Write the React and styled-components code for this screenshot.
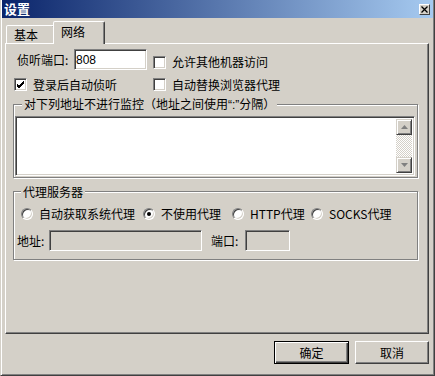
import React from 'react';
import styled, { createGlobalStyle } from 'styled-components';

const GlobalStyle = createGlobalStyle`
  html, body {
    margin: 0;
    padding: 0;
    background: #d4d0c8;
  }
  body {
    font-family: "Noto Sans CJK SC", "Liberation Sans", sans-serif;
    font-size: 12px;
    color: #000;
  }
  * {
    box-sizing: border-box;
  }
`;

const Window = styled.div`
  width: 435px;
  height: 376px;
  background: #d4d0c8;
  border-left: 1px solid #d4d0c8;
  border-right: 1px solid #404040;
  border-bottom: 1px solid #404040;
  box-shadow: inset 1px 0 0 #fff, inset -1px -1px 0 #808080;
  padding: 0 1px 1px 1px;
  display: flex;
  flex-direction: column;
`;

const TitleBar = styled.div`
  height: 18px;
  display: flex;
  align-items: center;
  justify-content: space-between;
  padding: 0 3px 0 2px;
  background: linear-gradient(to right, #0a246a, #a6caf0);
`;

const Title = styled.span`
  color: #fff;
  font-weight: bold;
  font-size: 13px;
  line-height: 18px;
`;

const CloseButton = styled.div`
  width: 11px;
  height: 11px;
  background: #d4d0c8;
  border: 1px solid;
  border-color: #fff #404040 #404040 #fff;
  display: flex;
  align-items: center;
  justify-content: center;
`;

const TabStrip = styled.div`
  height: 22px;
  margin: 3px 4px 0 3px;
  padding-left: 1px;
  display: flex;
  align-items: flex-end;
`;

const Tab = styled.div`
  position: relative;
  width: ${(p) => (p.$active ? 52 : 49)}px;
  height: ${(p) => (p.$active ? 23 : 18)}px;
  margin-left: ${(p) => (p.$active ? -2 : 0)}px;
  margin-bottom: ${(p) => (p.$active ? -1 : 0)}px;
  z-index: ${(p) => (p.$active ? 2 : 1)};
  padding: ${(p) => (p.$active ? 3 : 2)}px 0 0 7px;
  background: #d4d0c8;
  border: 1px solid;
  border-bottom: none;
  border-color: #fff #404040 transparent #fff;
  border-radius: 2px 2px 0 0;
  box-shadow: inset -1px 0 0 #808080;
  line-height: 14px;
  white-space: nowrap;
`;

const Panel = styled.div`
  height: 291px;
  margin: 0 4px 0 3px;
  border: 1px solid;
  border-color: #fff #404040 #404040 #fff;
  box-shadow: inset -1px -1px 0 #808080;
  padding: 5px 0 0 7px;
  display: flex;
  flex-direction: column;
`;

const TopGrid = styled.div`
  margin-left: 1px;
  display: grid;
  grid-template-columns: 139px auto;
  grid-template-rows: 21px 13px;
  row-gap: 8px;
  align-items: center;
`;

const Field = styled.div`
  display: flex;
  align-items: center;
  padding-left: ${(p) => p.$indent || 0}px;
`;

const FieldLabel = styled.span`
  width: ${(p) => p.$width}px;
  margin-left: ${(p) => p.$gap || 0}px;
  line-height: 14px;
  white-space: nowrap;
`;

const TextBox = styled.input`
  width: ${(p) => p.$width}px;
  height: 21px;
  margin: 0;
  padding: 0 1px;
  font-family: "Liberation Sans", "Noto Sans CJK SC", sans-serif;
  font-size: 12px;
  color: #000;
  background: ${(p) => (p.disabled ? '#d4d0c8' : '#fff')};
  border: 1px solid;
  border-color: #808080 #fff #fff #808080;
  box-shadow: inset 1px 1px 0 #404040, inset -1px -1px 0 #d4d0c8;
  outline: none;
`;

const CheckLabel = styled.label`
  display: flex;
  align-items: center;
  gap: 6px;
  line-height: 14px;
  white-space: nowrap;
  align-self: ${(p) => (p.$low ? 'end' : 'center')};
  margin-bottom: ${(p) => (p.$low ? 1 : 0)}px;
`;

const Box = styled.span`
  width: 13px;
  height: 13px;
  flex: none;
  background: #fff;
  border: 1px solid;
  border-color: #808080 #fff #fff #808080;
  box-shadow: inset 1px 1px 0 #404040, inset -1px -1px 0 #d4d0c8;
  display: flex;
  align-items: center;
  justify-content: center;
`;

const Group = styled.fieldset`
  width: 405px;
  margin: ${(p) => p.$top}px 0 0 0;
  padding: ${(p) => p.$pad};
  border: 1px solid #808080;
  box-shadow: 1px 1px 0 #fff, inset 1px 1px 0 #fff;
  min-width: 0;
`;

const Legend = styled.legend`
  margin-left: 7px;
  padding: 0 2px;
  line-height: 13px;
  background: #d4d0c8;
  white-space: nowrap;
`;

const Narrow = styled.span`
  font-family: "Liberation Sans", sans-serif;
`;

const Memo = styled.div`
  height: 60px;
  display: flex;
  border: 1px solid;
  border-color: #808080 #fff #fff #808080;
  box-shadow: inset 1px 1px 0 #404040, inset -1px -1px 0 #d4d0c8;
  padding: 2px;
  background: #fff;
`;

const MemoText = styled.textarea`
  flex: 1;
  margin: 0;
  padding: 1px 2px;
  border: none;
  outline: none;
  resize: none;
  overflow: hidden;
  font-family: inherit;
  font-size: 12px;
  background: #fff;
`;

const ScrollBar = styled.div`
  width: 16px;
  display: flex;
  flex-direction: column;
  justify-content: space-between;
  background-color: #fff;
  background-image: repeating-conic-gradient(#d4d0c8 0 25%, #fff 0 50%);
  background-size: 2px 2px;
`;

const ArrowButton = styled.div`
  width: 16px;
  height: 16px;
  background: #d4d0c8;
  border: 1px solid;
  border-color: #d4d0c8 #404040 #404040 #d4d0c8;
  box-shadow: inset 1px 1px 0 #fff, inset -1px -1px 0 #808080;
  display: flex;
  align-items: center;
  justify-content: center;
`;

const RadioRow = styled.div`
  height: 13px;
  margin-top: 9px;
  padding-left: 7px;
  display: flex;
  align-items: center;
`;

const RadioItem = styled.label`
  width: ${(p) => (p.$width ? `${p.$width}px` : 'auto')};
  display: flex;
  align-items: center;
  gap: 6px;
  line-height: 14px;
  white-space: nowrap;
`;

const RadioDot = styled.span`
  width: 12px;
  height: 12px;
  flex: none;
  border-radius: 50%;
  background: #fff;
  border: 1px solid;
  border-color: #808080 #fff #fff #808080;
  box-shadow: inset 1px 1px 0 #404040, inset -1px -1px 0 #d4d0c8;
  display: flex;
  align-items: center;
  justify-content: center;

  &::after {
    content: '';
    width: 4px;
    height: 4px;
    border-radius: 50%;
    background: ${(p) => (p.$checked ? '#000' : 'transparent')};
  }
`;

const AddressRow = styled.div`
  margin-top: 10px;
  padding-left: 3px;
  display: flex;
  align-items: center;
`;

const ButtonBar = styled.div`
  margin: 7px 4px 0 0;
  display: flex;
  justify-content: flex-end;
  gap: 6px;
`;

const DialogButton = styled.button`
  width: ${(p) => p.$width}px;
  height: 23px;
  margin: 0;
  padding: 0;
  font-family: inherit;
  font-size: 12px;
  color: #000;
  background: #d4d0c8;
  border: 1px solid;
  border-color: ${(p) => (p.$default ? '#000' : '#fff #404040 #404040 #fff')};
  box-shadow: ${(p) =>
    p.$default
      ? 'inset 1px 1px 0 #fff, inset -1px -1px 0 #404040, inset -2px -2px 0 #808080'
      : 'inset -1px -1px 0 #808080'};
  line-height: 14px;
`;

const CheckMark = () => (
  <svg width="9" height="9" viewBox="0 0 9 9">
    <path d="M1 4 L3 6 L8 1 M1 5 L3 7 L8 2 M1 6 L3 8 L8 3" stroke="#000" strokeWidth="1" fill="none" />
  </svg>
);

const Arrow = ({ up }) => (
  <svg width="7" height="4" viewBox="0 0 7 4">
    <polygon points={up ? '3.5,0 7,4 0,4' : '0,0 7,0 3.5,4'} fill="#808080" />
  </svg>
);

const Check = ({ checked, children, low }) => (
  <CheckLabel $low={low}>
    <Box>{checked && <CheckMark />}</Box>
    {children}
  </CheckLabel>
);

const proxyModes = [
  { label: '自动获取系统代理', width: 122 },
  { label: '不使用代理', width: 89, checked: true },
  { label: 'HTTP代理', width: 79 },
  { label: 'SOCKS代理' },
];

const App = () => (
  <>
    <GlobalStyle />
    <Window>
      <TitleBar>
        <Title>设置</Title>
        <CloseButton>
          <svg width="7" height="7" viewBox="0 0 7 7">
            <path d="M0.5 0.5 L6.5 6.5 M6.5 0.5 L0.5 6.5" stroke="#000" strokeWidth="1.3" />
          </svg>
        </CloseButton>
      </TitleBar>

      <TabStrip>
        <Tab>基本</Tab>
        <Tab $active>网络</Tab>
      </TabStrip>

      <Panel>
        <TopGrid>
          <Field $indent={3}>
            <FieldLabel $width={57}>侦听端口:</FieldLabel>
            <TextBox $width={73} defaultValue="808" />
          </Field>
          <Check low>允许其他机器访问</Check>
          <Check checked>登录后自动侦听</Check>
          <Check>自动替换浏览器代理</Check>
        </TopGrid>

        <Group $top={6} $pad="4px 2px 1px 1px">
          <Legend>
            对下列地址不进行监控（地址之间使用<Narrow>“:”</Narrow>分隔）
          </Legend>
          <Memo>
            <MemoText />
            <ScrollBar>
              <ArrowButton>
                <Arrow up />
              </ArrowButton>
              <ArrowButton>
                <Arrow />
              </ArrowButton>
            </ScrollBar>
          </Memo>
        </Group>

        <Group $top={7} $pad="0 0 8px 0">
          <Legend>代理服务器</Legend>
          <RadioRow>
            {proxyModes.map((m) => (
              <RadioItem key={m.label} $width={m.width}>
                <RadioDot $checked={m.checked} />
                {m.label}
              </RadioItem>
            ))}
          </RadioRow>
          <AddressRow>
            <FieldLabel $width={32}>地址:</FieldLabel>
            <TextBox $width={153} disabled />
            <FieldLabel $width={34} $gap={9}>端口:</FieldLabel>
            <TextBox $width={45} disabled />
          </AddressRow>
        </Group>
      </Panel>

      <ButtonBar>
        <DialogButton $width={75} $default>确定</DialogButton>
        <DialogButton $width={74}>取消</DialogButton>
      </ButtonBar>
    </Window>
  </>
);

export default App;
